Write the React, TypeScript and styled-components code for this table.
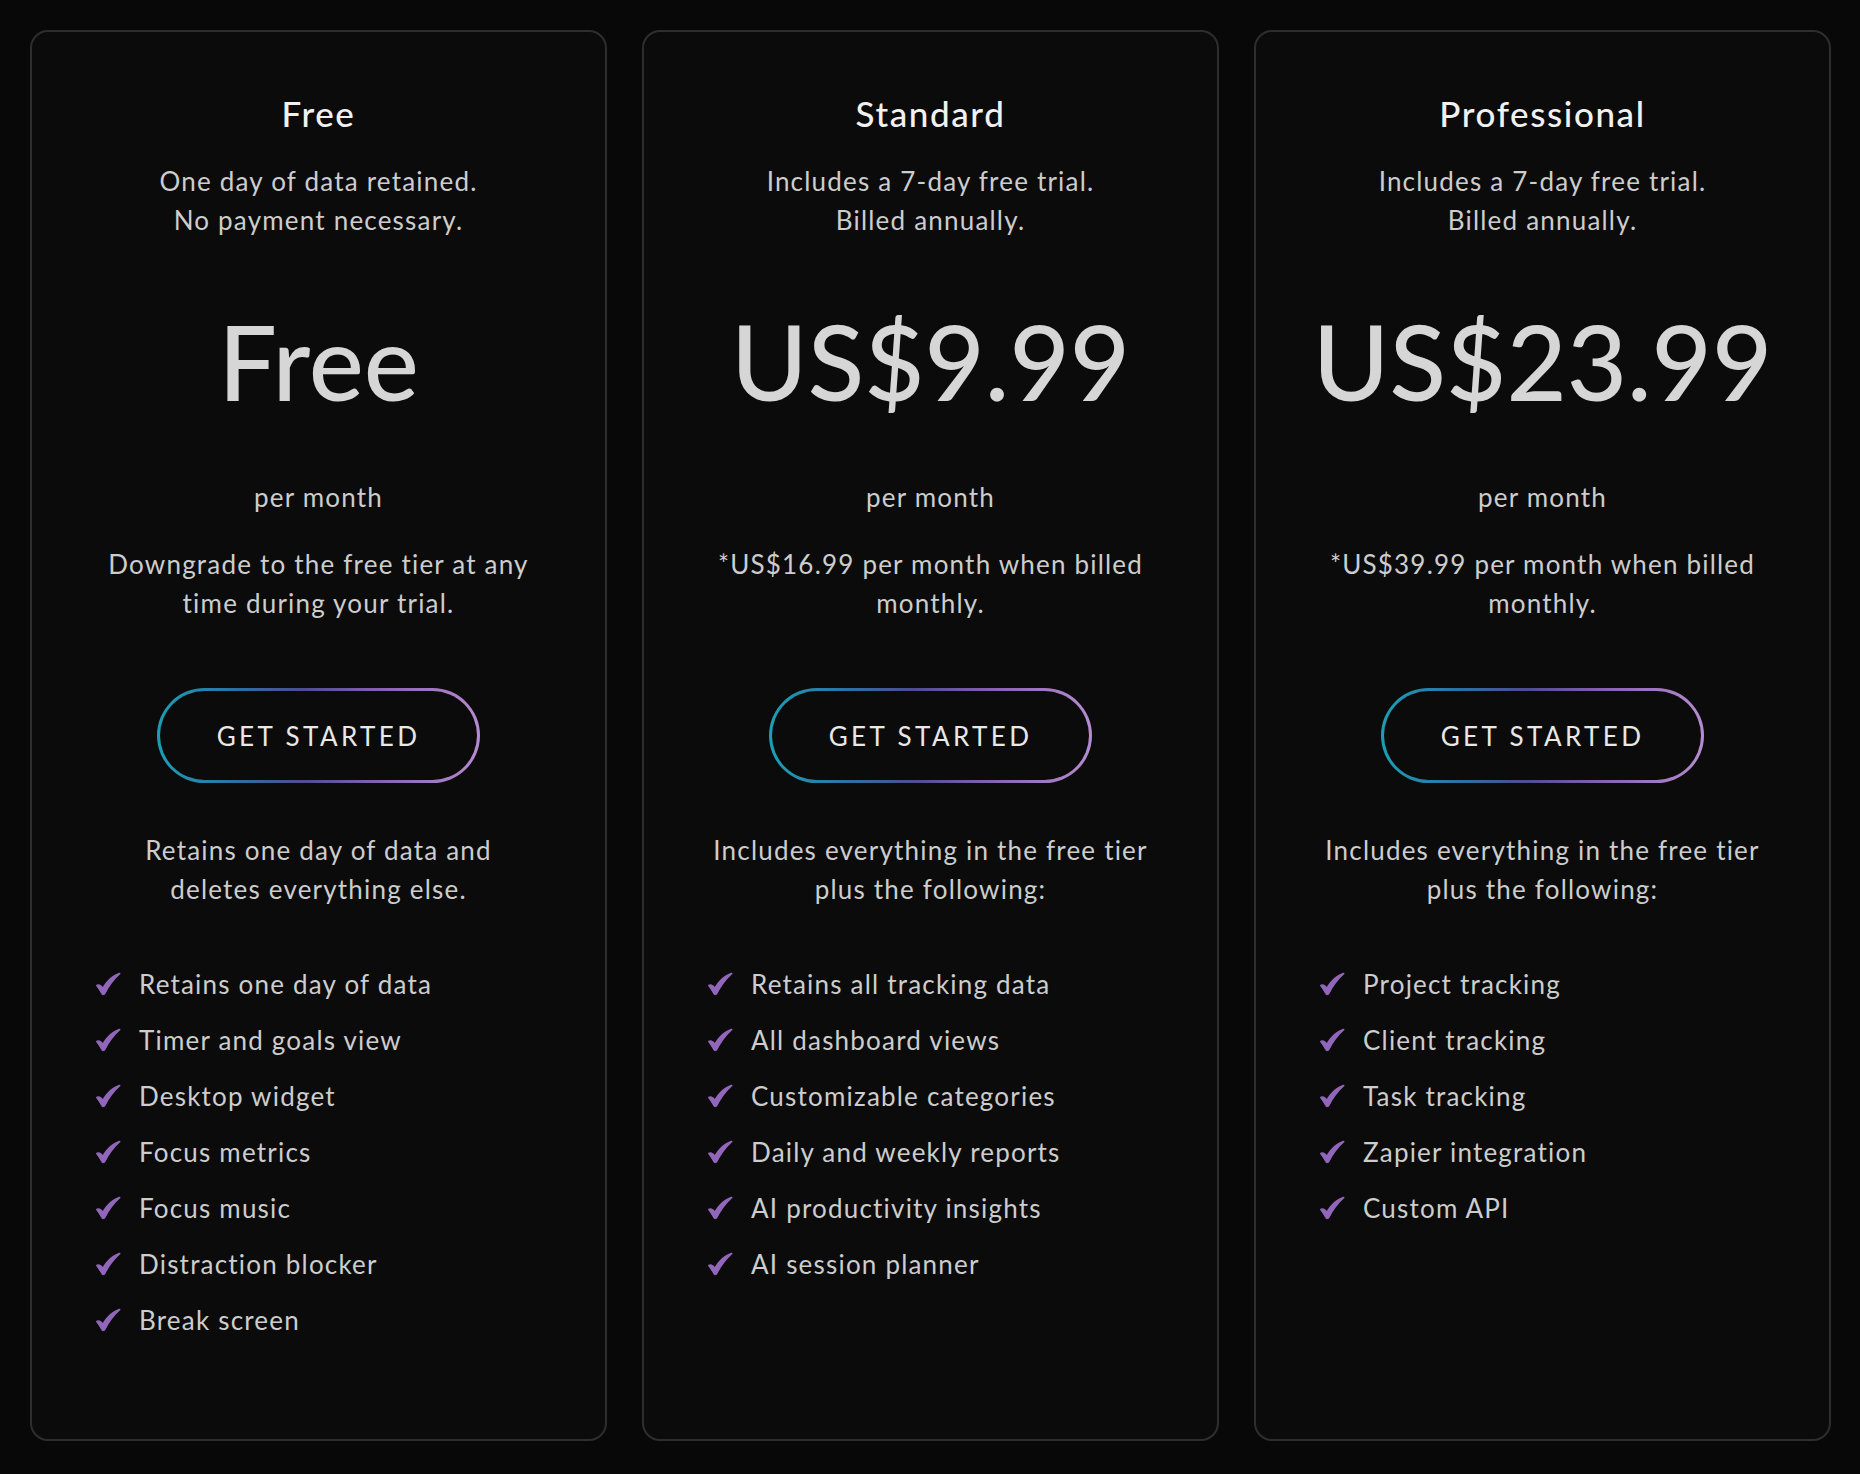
import React from "react";
import styled, { createGlobalStyle } from "styled-components";

const Global = createGlobalStyle`
  html, body { margin: 0; padding: 0; background: #080808; }
  body { font-family: Lato, "Open Sans", "Noto Sans", sans-serif; color: #cfcfcf; }
  * { box-sizing: border-box; }
`;

const Page = styled.div`
  width: 1860px;
  min-height: 1474px;
  padding: 30px 27px 33px 30px;
  display: grid;
  grid-template-columns: repeat(3, 577px);
  column-gap: 35px;
  background: #080808;
`;

const Card = styled.section`
  height: 1411px;
  background: #0b0b0b;
  border: 2px solid #2e2e2e;
  border-radius: 18px;
  display: flex;
  flex-direction: column;
  align-items: center;
  padding-top: 61px;
`;

const Title = styled.h2`
  margin: 0;
  font-size: 35px;
  line-height: 41px;
  font-weight: 500;
  letter-spacing: 1.6px;
  color: #f1f1f1;
`;

const Text = styled.p<{ $gap: number }>`
  margin: ${(p) => p.$gap}px 0 0;
  font-size: 26px;
  line-height: 39px;
  font-weight: 400;
  letter-spacing: 1.2px;
  color: #cdcdcd;
  text-align: center;
  white-space: nowrap;
`;

const Price = styled.div`
  margin-top: 58px;
  font-size: 104px;
  line-height: 126px;
  font-weight: 500;
  color: #d6d6d6;
  letter-spacing: 0;
`;

const Button = styled.button`
  margin-top: 65px;
  width: 323px;
  height: 95px;
  border-radius: 48px;
  border: 3px solid transparent;
  background:
    linear-gradient(#0b0b0b, #0b0b0b) padding-box,
    linear-gradient(90deg, #1b9fb6 0%, #2f6f9f 25%, #4d4e8f 45%, #8a62ae 70%, #b68bd2 100%) border-box;
  color: #e8e8e8;
  font-family: Lato, "Open Sans", sans-serif;
  font-size: 26px;
  letter-spacing: 3.4px;
  font-weight: 400;
  display: flex;
  align-items: center;
  justify-content: center;
  cursor: pointer;
`;

const List = styled.ul`
  list-style: none;
  margin: 47px 0 0;
  padding: 0 0 0 63px;
  align-self: stretch;
`;

const Item = styled.li`
  display: flex;
  align-items: center;
  height: 56px;
  font-size: 26px;
  letter-spacing: 1.2px;
  color: #cdcdcd;
`;

const CheckIcon = styled.svg`
  width: 26px;
  height: 24px;
  flex: none;
  margin-right: 18px;
  fill: #9267bb;
`;

const Check = () => (
  <CheckIcon viewBox="0 0 26 24" aria-hidden="true">
    <path d="M0.8 13.2 C3 11.4 5.6 12 7.8 15 C11.5 8.8 16.8 3.6 24 0.8 C25.4 0.4 26 1.4 25.1 2.2 C19 7.6 14.3 14 10.4 21.8 C9.6 23.4 7.6 23.6 6.6 22.2 C4.8 19.2 3 16.2 0.8 13.2 Z" />
  </CheckIcon>
);

type Plan = {
  name: string;
  desc: string[];
  price: string;
  note: string[];
  intro: string[];
  features: string[];
};

const plans: Plan[] = [
  {
    name: "Free",
    desc: ["One day of data retained.", "No payment necessary."],
    price: "Free",
    note: ["Downgrade to the free tier at any", "time during your trial."],
    intro: ["Retains one day of data and", "deletes everything else."],
    features: [
      "Retains one day of data",
      "Timer and goals view",
      "Desktop widget",
      "Focus metrics",
      "Focus music",
      "Distraction blocker",
      "Break screen",
    ],
  },
  {
    name: "Standard",
    desc: ["Includes a 7-day free trial.", "Billed annually."],
    price: "US$9.99",
    note: ["*US$16.99 per month when billed", "monthly."],
    intro: ["Includes everything in the free tier", "plus the following:"],
    features: [
      "Retains all tracking data",
      "All dashboard views",
      "Customizable categories",
      "Daily and weekly reports",
      "AI productivity insights",
      "AI session planner",
    ],
  },
  {
    name: "Professional",
    desc: ["Includes a 7-day free trial.", "Billed annually."],
    price: "US$23.99",
    note: ["*US$39.99 per month when billed", "monthly."],
    intro: ["Includes everything in the free tier", "plus the following:"],
    features: [
      "Project tracking",
      "Client tracking",
      "Task tracking",
      "Zapier integration",
      "Custom API",
    ],
  },
];

const Lines = ({ lines }: { lines: string[] }) => (
  <>
    {lines.map((l, i) => (
      <React.Fragment key={i}>
        {i > 0 && <br />}
        {l}
      </React.Fragment>
    ))}
  </>
);

export default function App() {
  return (
    <>
      <Global />
      <Page>
        {plans.map((p) => (
          <Card key={p.name}>
            <Title>{p.name}</Title>
            <Text $gap={28}>
              <Lines lines={p.desc} />
            </Text>
            <Price>{p.price}</Price>
            <Text $gap={54}>per month</Text>
            <Text $gap={28}>
              <Lines lines={p.note} />
            </Text>
            <Button>GET STARTED</Button>
            <Text $gap={48}>
              <Lines lines={p.intro} />
            </Text>
            <List>
              {p.features.map((f) => (
                <Item key={f}>
                  <Check />
                  {f}
                </Item>
              ))}
            </List>
          </Card>
        ))}
      </Page>
    </>
  );
}
